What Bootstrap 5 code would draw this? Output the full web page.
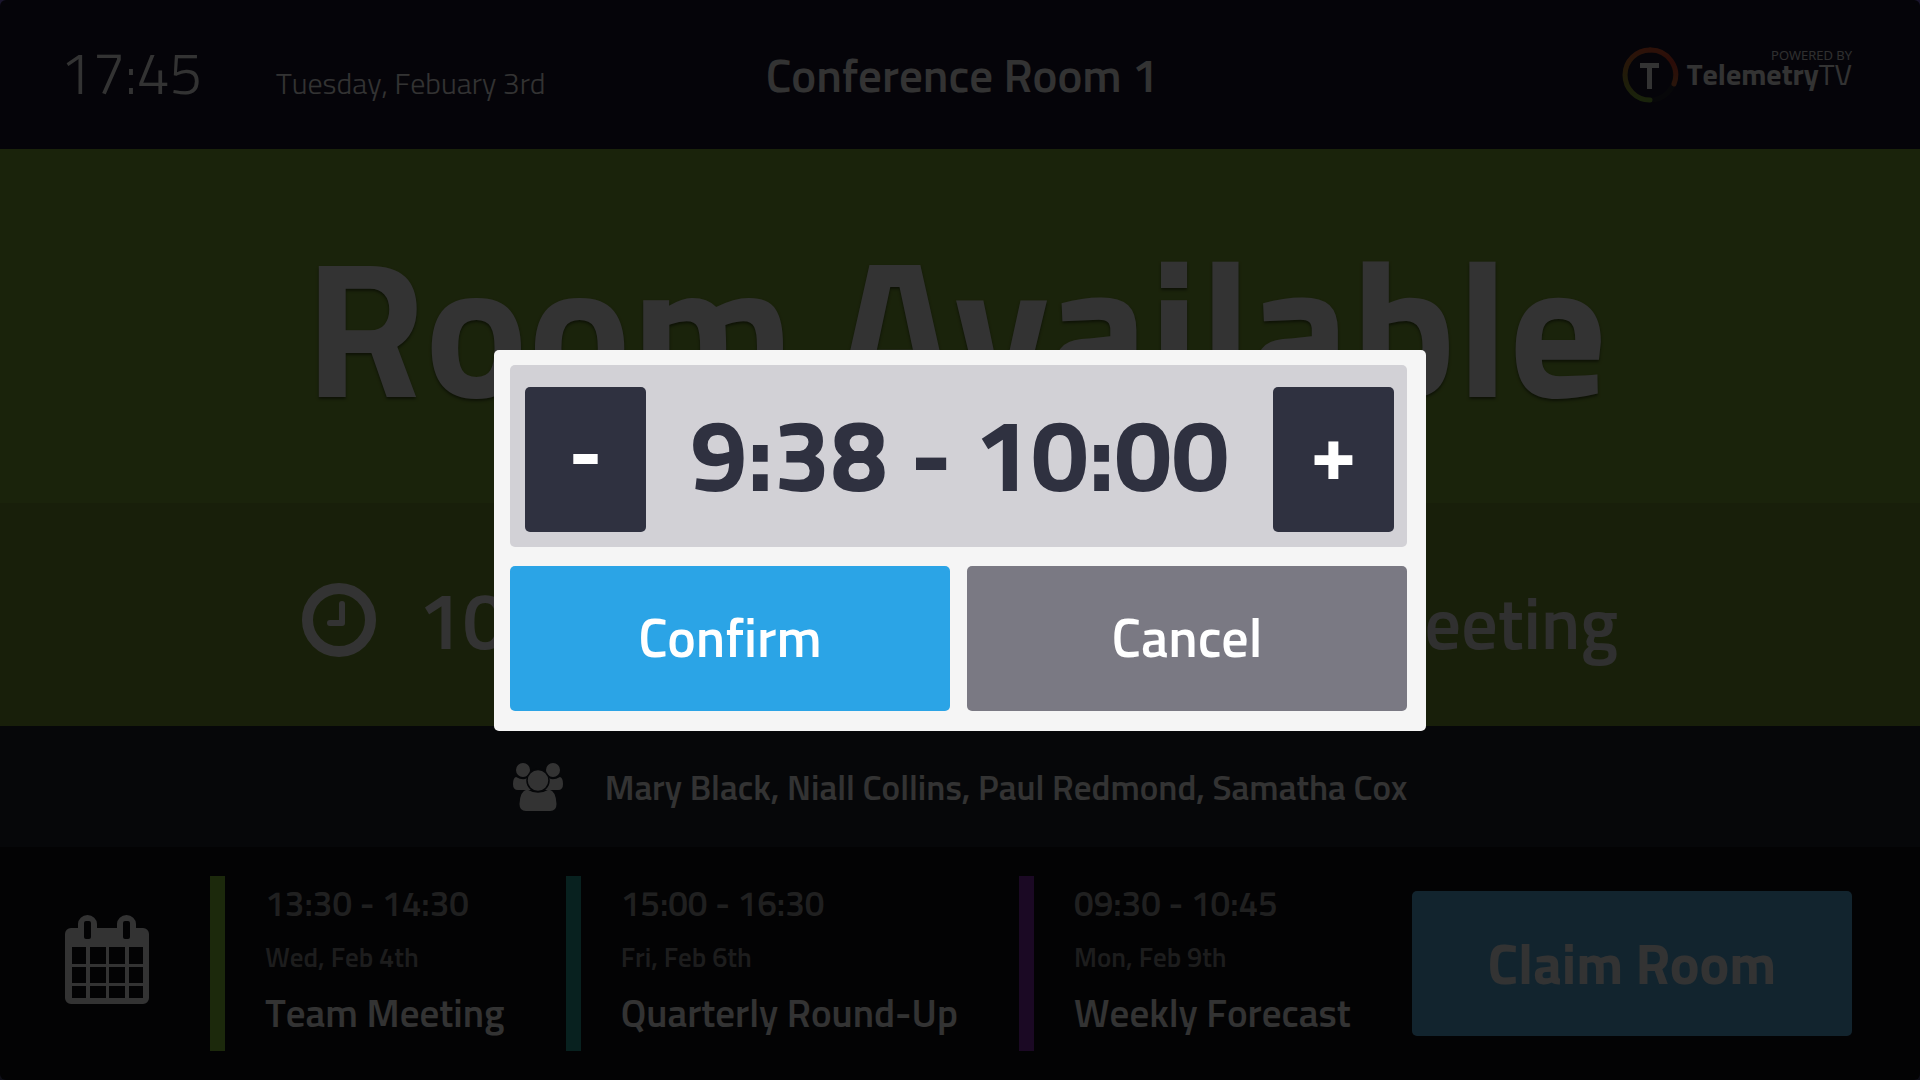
<!DOCTYPE html>
<html lang="en">
<head>
<meta charset="utf-8">
<meta name="viewport" content="width=device-width, initial-scale=1">
<title>Conference Room 1</title>
<link href="https://cdn.jsdelivr.net/npm/bootstrap@5.3.0/dist/css/bootstrap.min.css" rel="stylesheet">
<style>
  body { font-family: "Titillium Web", Roboto, "Open Sans", sans-serif; font-kerning: none; color: #fff; background: #10101a; }
  .board { min-height: 100vh; }
  .topbar { background: #1a152d; min-height: 149px; padding: 0 68px 0 60px; display: grid; grid-template-columns: 1fr auto 1fr; align-items: center; }
  .clock-now { font-size: 58px; line-height: 64px; font-weight: 300; }
  .date-now { font-size: 30px; line-height: 36px; font-weight: 300; }
  .when { gap: 74px; padding-bottom: 4px; }
  .room-name { font-size: 47px; line-height: 52px; font-weight: 600; padding-left: 12px; }
  .brand { padding-bottom: 14px; }
  .brand-name { font-size: 30px; line-height: 25px; font-weight: 700; }
  .brand-name span { font-weight: 400; }
  .powered { font-family: "Open Sans", sans-serif; font-size: 13px; line-height: 14px; color: #f0f0f0; }
  .status { background: #82ad37; min-height: 354px; padding: 0 8px 3px 0; }
  .status-text { font-size: 194px; line-height: 200px; font-weight: 700; text-shadow: 0 2px 3px rgba(0,0,0,.5); }
  .upcoming { background: #7a9d33; min-height: 223px; padding-top: 11px; }
  .upcoming-inner { width: 1316px; max-width: 100%; gap: 42px; }
  .up-time { font-size: 80px; line-height: 92px; font-weight: 600; }
  .up-title { font-size: 72px; line-height: 92px; font-weight: 600; color: #f0f0f0; }
  .people { background: #1e232d; min-height: 121px; gap: 42px; }
  .people-names { font-size: 35px; line-height: 40px; font-weight: 600; }
  .agenda { background: #0f0f18; min-height: 233px; padding: 0 68px 0 65px; }
  .slot { border-left: 15px solid; padding: 7px 0 16px 40px; gap: 18px; }
  .slot-green { border-color: #8ccd3c; }
  .slot-teal { border-color: #28a59b; }
  .slot-purple { border-color: #872db4; }
  .slot-time { font-size: 35px; line-height: 40px; font-weight: 600; color: #a0a0a0; }
  .slot-date { font-size: 27px; line-height: 32px; font-weight: 600; color: #909090; }
  .slot-title { font-size: 39px; line-height: 44px; font-weight: 600; color: #fff; }
  .calendar { margin-bottom: 8px; }
  .btn-tall { width: 440px; height: 145px; border: 0; border-radius: 5px; color: #fff; font-size: 54px; line-height: 60px; font-weight: 600; }
  .btn-claim { background: #5ab4e6; font-size: 56px; font-weight: 700; }
  .btn-confirm { background: #2ba4e6; padding-bottom: 8px; }
  .btn-cancel { background: #7a7983; padding-bottom: 8px; }
  .shade { background: rgba(0,0,0,.8); border-radius: 6px; opacity: 1 !important; }
  .picker { max-width: 932px; }
  .picker-box { background: #f5f5f5; border: 0; border-radius: 5px; padding: 15px 19px 20px 16px; gap: 19px; }
  .picker-range { background: #d2d1d6; border-radius: 5px; padding: 22px 13px 15px 15px; }
  .btn-step { width: 121px; height: 145px; border: 0; border-radius: 5px; background: #2f3140; color: #fff; font-size: 82px; line-height: 80px; font-weight: 700; padding: 0 0 16px; }
  .range-text { font-size: 102px; line-height: 112px; font-weight: 700; color: #2f3140; padding-bottom: 12px; }
  .picker-actions { gap: 17px; }
</style>
<script src="https://cdn.jsdelivr.net/npm/bootstrap@5.3.0/dist/js/bootstrap.bundle.min.js"></script>
</head>
<body>
<div class="board d-flex flex-column">
  <header class="topbar">
    <div class="when d-flex align-items-baseline text-nowrap">
      <time class="clock-now">17:45</time>
      <span class="date-now">Tuesday, Febuary 3rd</span>
    </div>
    <h1 class="room-name m-0 text-nowrap">Conference Room 1</h1>
    <div class="d-flex align-items-center justify-content-end gap-2">
      <svg width="58" height="58" viewBox="0 0 58 58" fill="none" aria-hidden="true">
        <defs>
          <linearGradient id="arcLeft" x1="0" y1="1" x2="0" y2="0"><stop offset="0" stop-color="#7fb03a"/><stop offset=".45" stop-color="#a08a32"/><stop offset="1" stop-color="#e0582f"/></linearGradient>
          <linearGradient id="arcRight" x1="0" y1="0" x2="0" y2="1"><stop offset="0" stop-color="#e0582f"/><stop offset=".35" stop-color="#d83c28"/><stop offset="1" stop-color="#d06a38"/></linearGradient>
        </defs>
        <circle cx="29" cy="29" r="25" stroke="#26262e" stroke-width="5"/>
        <path d="M29 54A25 25 0 0 1 29 4" stroke="url(#arcLeft)" stroke-width="5" stroke-linecap="round"/>
        <path d="M29 4A25 25 0 0 1 53 38" stroke="url(#arcRight)" stroke-width="5" stroke-linecap="round"/>
        <rect x="19" y="17" width="19" height="5" fill="#fff"/>
        <rect x="26" y="17" width="5" height="26" fill="#fff"/>
      </svg>
      <div class="brand text-end">
        <div class="powered">POWERED BY</div>
        <div class="brand-name">Telemetry<span>TV</span></div>
      </div>
    </div>
  </header>

  <section class="status d-flex align-items-center justify-content-center">
    <div class="status-text text-nowrap">Room Available</div>
  </section>

  <section class="upcoming d-flex align-items-center justify-content-center">
    <div class="upcoming-inner d-flex align-items-center">
      <svg width="74" height="74" viewBox="0 0 74 74" fill="none" aria-hidden="true">
        <circle cx="37" cy="37" r="31.5" stroke="#fff" stroke-width="11"/>
        <path d="M40 21V40H28" stroke="#fff" stroke-width="6" stroke-linecap="round" stroke-linejoin="round"/>
      </svg>
      <div class="d-flex flex-grow-1 align-items-baseline justify-content-between text-nowrap">
        <span class="up-time">10:00 - 11:00</span>
        <span class="up-title">Meeting</span>
      </div>
    </div>
  </section>

  <section class="people d-flex align-items-center justify-content-center">
    <svg width="50" height="48" viewBox="0 0 50 48" fill="#fff" aria-hidden="true">
      <circle cx="10" cy="7" r="7"/><circle cx="40" cy="7" r="7"/>
      <path d="M3 14Q10 18 14 15Q13 22 18 27H5Q0 27 0 21Q0 15 3 14Z"/>
      <path d="M47 14Q40 18 36 15Q37 22 32 27H45Q50 27 50 21Q50 15 47 14Z"/>
      <circle cx="25" cy="17.500" r="11" stroke="#1e232d" stroke-width="1.500"/>
      <path d="M14 26.500Q25 33 36 26.500Q43 28 43.500 41Q43.500 48 37 48H13Q6.500 48 6.500 41Q7 28 14 26.500Z"/>
    </svg>
    <div class="people-names">Mary Black, Niall Collins, Paul Redmond, Samatha Cox</div>
  </section>

  <footer class="agenda d-flex flex-grow-1 align-items-center justify-content-between text-nowrap">
    <svg class="calendar" width="84" height="90" viewBox="0 0 84 90" aria-hidden="true">
      <path fill="#fff" fill-rule="evenodd" d="M6 13H13V9a9.500 9 0 0 1 19 0V13H52V9a9.500 9 0 0 1 19 0V13H78a6 6 0 0 1 6 6V83a6 6 0 0 1-6 6H6a6 6 0 0 1-6-6V19a6 6 0 0 1 6-6ZM7 32V49H21V32ZM25 32V49H41V32ZM44 32V49H60V32ZM64 32V49H78V32ZM7 52V68H21V52ZM25 52V68H41V52ZM44 52V68H60V52ZM64 52V68H78V52ZM7 71V83H21V71ZM25 71V83H41V71ZM44 71V83H60V71ZM64 71V83H78V71Z"/>
      <rect x="19" y="6" width="7" height="18" rx="2" fill="#0f0f18"/>
      <rect x="58" y="6" width="7" height="18" rx="2" fill="#0f0f18"/>
    </svg>
    <article class="slot slot-green d-flex flex-column">
      <div class="slot-time">13:30 - 14:30</div>
      <div class="slot-date">Wed, Feb 4th</div>
      <div class="slot-title">Team Meeting</div>
    </article>
    <article class="slot slot-teal d-flex flex-column">
      <div class="slot-time">15:00 - 16:30</div>
      <div class="slot-date">Fri, Feb 6th</div>
      <div class="slot-title">Quarterly Round-Up</div>
    </article>
    <article class="slot slot-purple d-flex flex-column">
      <div class="slot-time">09:30 - 10:45</div>
      <div class="slot-date">Mon, Feb 9th</div>
      <div class="slot-title">Weekly Forecast</div>
    </article>
    <button type="button" class="btn btn-tall btn-claim">Claim Room</button>
  </footer>
</div>

<div class="modal-backdrop shade show"></div>
<div class="modal show d-block" role="dialog" aria-modal="true" aria-label="Claim room">
  <div class="modal-dialog modal-dialog-centered picker">
    <div class="modal-content picker-box">
      <div class="picker-range d-flex align-items-center justify-content-between">
        <button type="button" class="btn btn-step" aria-label="Shorter">-</button>
        <output class="range-text text-nowrap">9:38 - 10:00</output>
        <button type="button" class="btn btn-step" aria-label="Longer">+</button>
      </div>
      <div class="picker-actions d-flex">
        <button type="button" class="btn btn-tall btn-confirm flex-fill">Confirm</button>
        <button type="button" class="btn btn-tall btn-cancel flex-fill">Cancel</button>
      </div>
    </div>
  </div>
</div>
</body>
</html>
